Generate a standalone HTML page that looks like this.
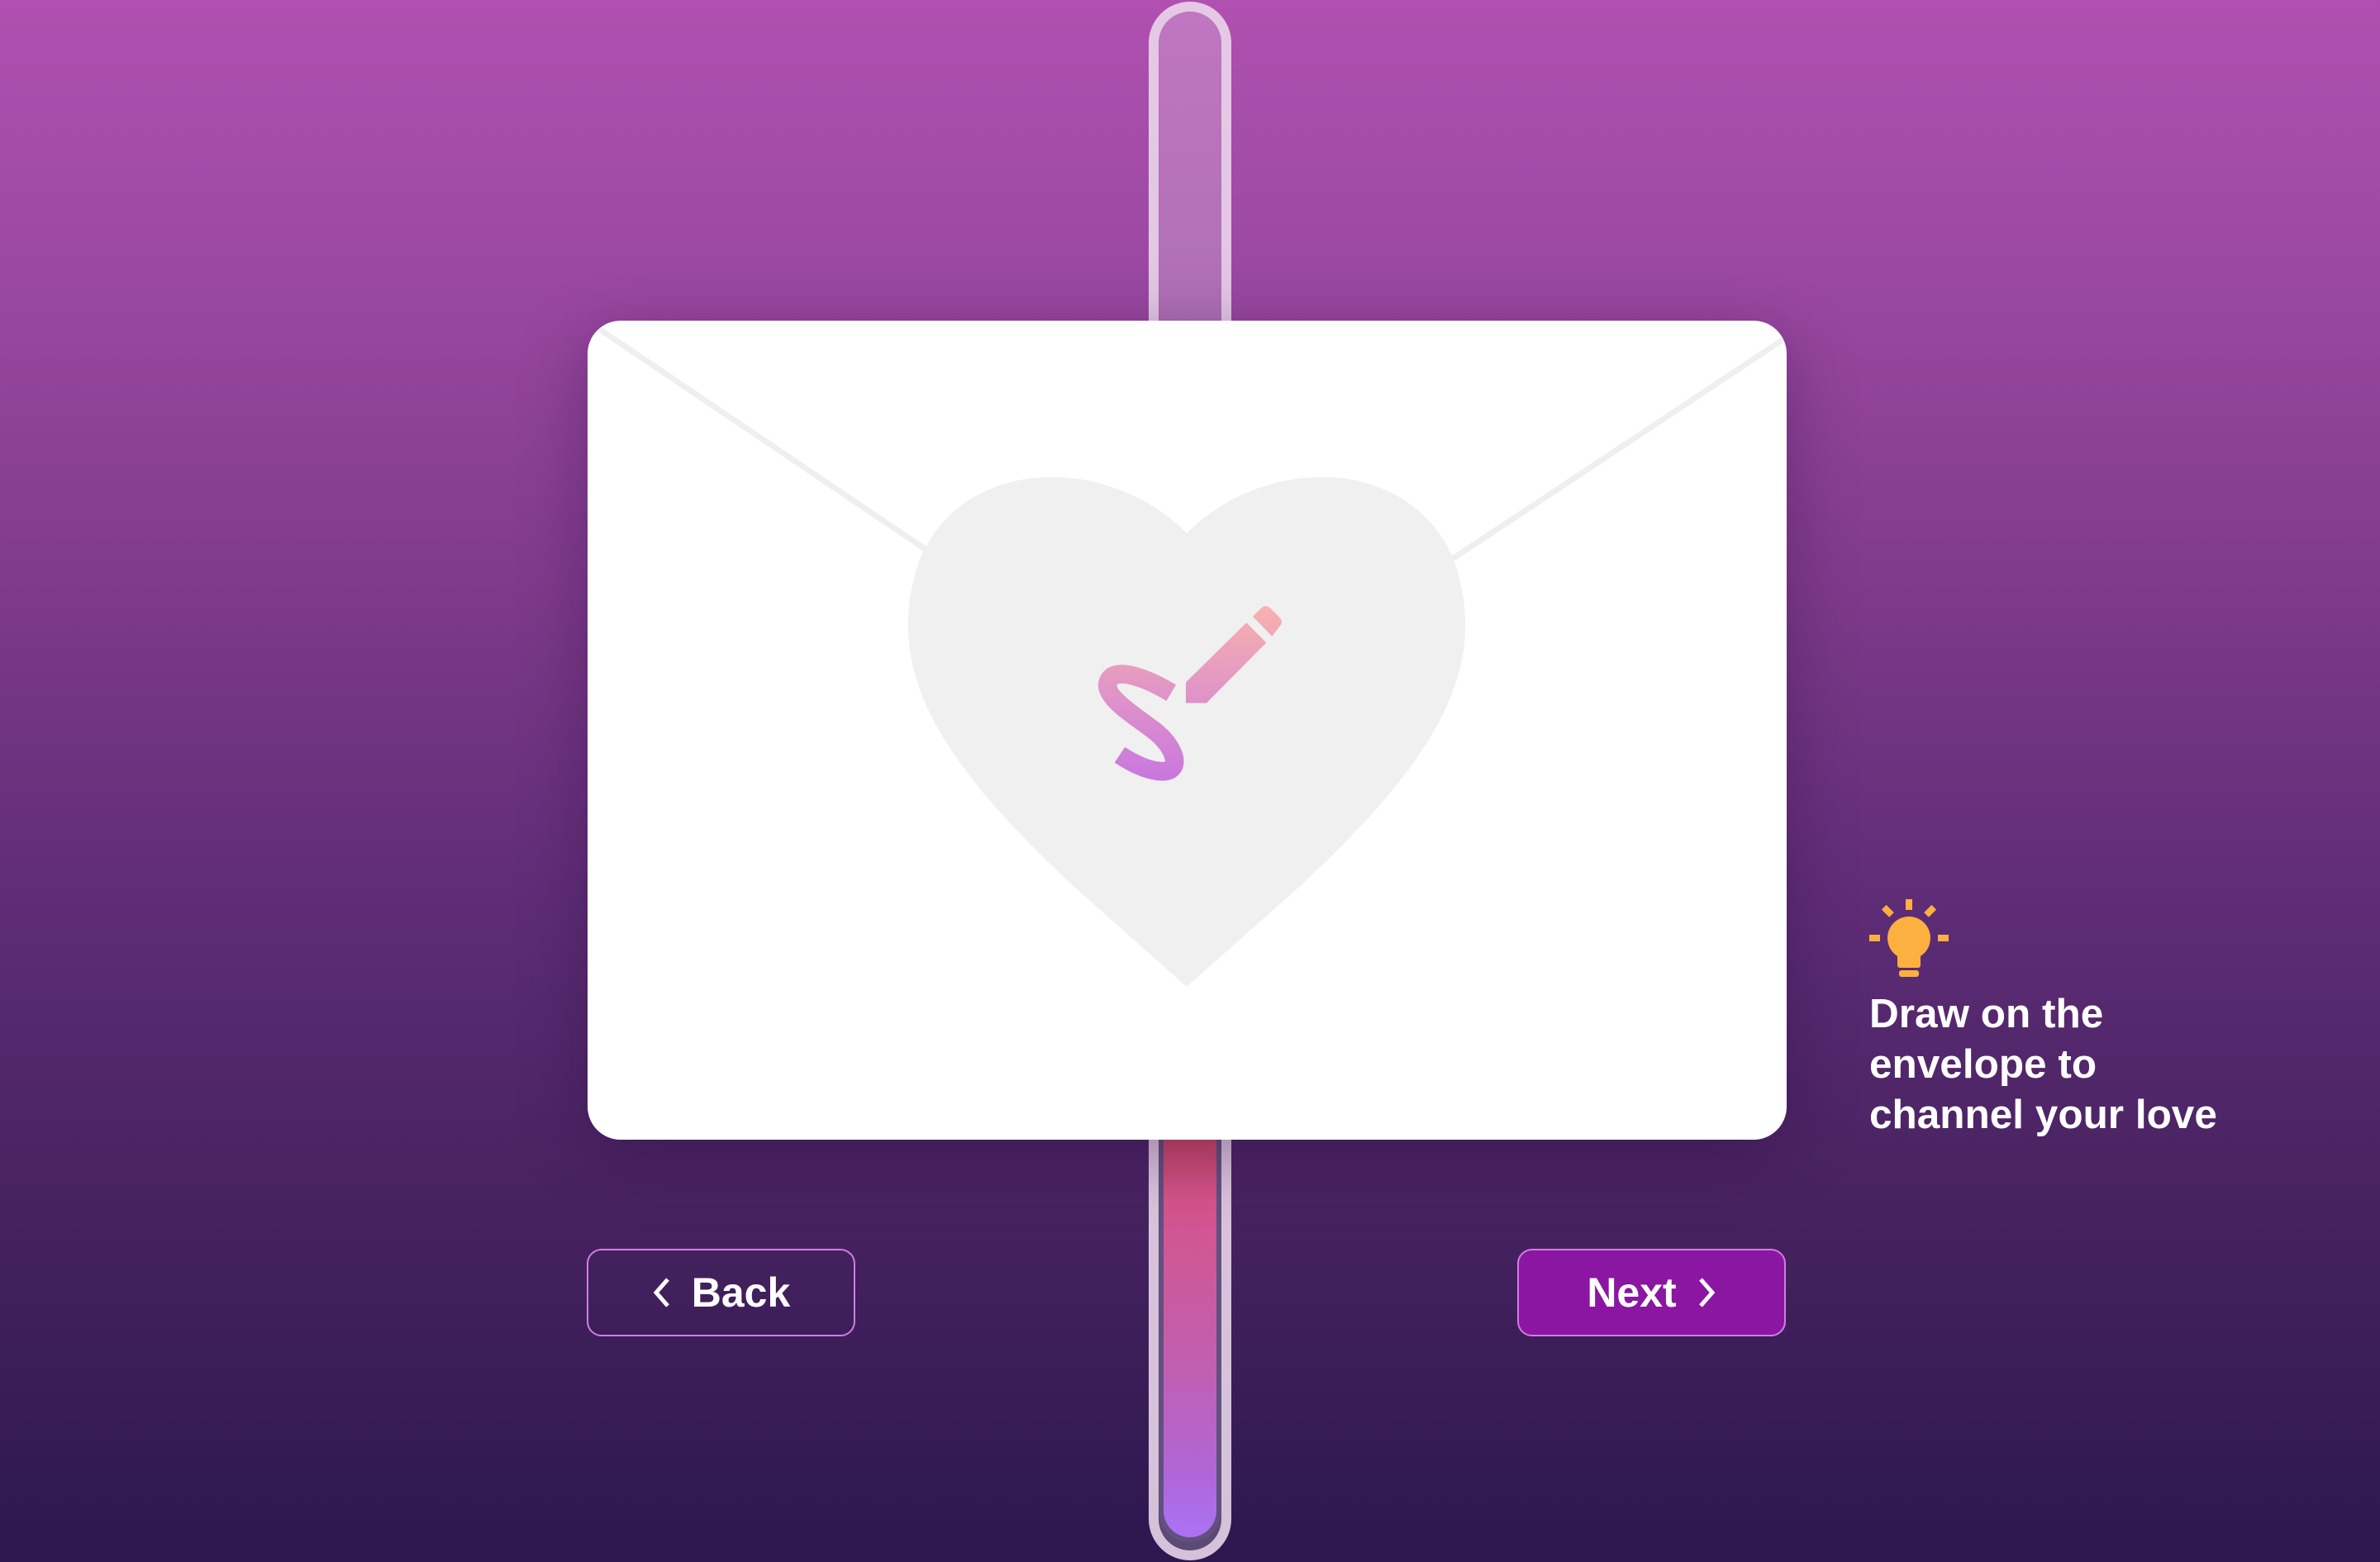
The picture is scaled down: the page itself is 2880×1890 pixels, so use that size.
<!DOCTYPE html>
<html><head><meta charset="utf-8"><style>
html,body{margin:0;padding:0}
body{width:2880px;height:1890px;position:relative;overflow:hidden;font-family:"Liberation Sans",sans-serif;
background:linear-gradient(180deg,#b050b0 0%,#9a48a2 18%,#7e3a8a 38%,#5e2c76 58%,#46225f 78%,#2c174f 100%);}
.tube{position:absolute;left:1390px;top:2px;width:76px;height:1862px;border:12px solid rgba(235,215,235,0.85);border-radius:50px;background:rgba(255,255,255,0.22);}
.fill{position:absolute;left:1402px;top:1370px;width:76px;height:496px;background:#62507f;border-radius:0 0 38px 38px;}
.fill div{position:absolute;left:6px;top:0;width:64px;height:490px;border-radius:0 0 32px 32px;background:linear-gradient(180deg,#c54762 0%,#d4548d 18%,#c35ead 55%,#b066d8 85%,#ab72f5 100%);}
.env{position:absolute;left:711px;top:388px;width:1451px;height:991px;background:#fff;border-radius:40px;box-shadow:0 20px 80px rgba(40,10,60,0.35);overflow:hidden}
.btn{position:absolute;top:1511px;width:325px;height:106px;border:2px solid #d07ee0;border-radius:18px;color:#fff;font-size:50px;font-weight:bold;box-sizing:border-box;display:flex;align-items:center;justify-content:center;gap:24px}
.tip{position:absolute;left:2262px;top:1196px;color:#fff;font-size:49.5px;font-weight:bold;line-height:61px}
</style></head><body>
<div class="tube"></div>
<div class="fill"><div></div></div>
<div class="env">
<svg width="1451" height="991" viewBox="711 388 1451 991" style="position:absolute;left:0;top:0">
<path d="M725,398 L1125,668 M2162,408 L1755,678" stroke="#efefef" stroke-width="7" fill="none"/>
<path d="M1436,645 C1335,545 1160,555 1112,680 C1068,810 1135,920 1302,1075 L1436,1194 L1570,1075 C1737,920 1804,810 1760,680 C1712,555 1537,545 1436,645 Z" fill="#f0f0f0"/>
<defs><linearGradient id="g" gradientUnits="userSpaceOnUse" x1="0" y1="160" x2="0" y2="800"><stop offset="0" stop-color="#f8b2ae"/><stop offset="1" stop-color="#c876e0"/></linearGradient></defs>
<g transform="translate(1300,680) scale(0.3333)">
<path d="M352,475 C260,420 150,380 125,430 C95,490 240,570 300,620 C370,680 390,760 320,760 C270,760 210,730 165,700" stroke="url(#g)" stroke-width="68" fill="none"/>
<polygon points="405,437 625,220 697,293 480,512 405,512" fill="url(#g)"/>
<path d="M648,198 L678,168 Q695,152 712,168 L745,201 Q761,218 745,234 L718,270 Z" fill="url(#g)"/>
</g>
</svg>
</div>
<div class="btn" style="left:710px;background:transparent"><svg width="24" height="40" viewBox="0 0 24 40"><path d="M19,4 L5,20 L19,36" stroke="#fff" stroke-width="5" fill="none"/></svg><span>Back</span></div>
<div class="btn" style="left:1836px;background:#8a16a2"><span>Next</span><svg width="24" height="40" viewBox="0 0 24 40"><path d="M5,4 L19,20 L5,36" stroke="#fff" stroke-width="5" fill="none"/></svg></div>
<svg style="position:absolute;left:2258px;top:1085px" width="104" height="104" viewBox="0 0 104 104">
<g fill="#fbb040">
<rect x="48" y="3" width="8" height="13"/>
<rect x="22" y="11" width="8" height="13" transform="rotate(-45 26 17)"/>
<rect x="74" y="11" width="8" height="13" transform="rotate(45 78 17)"/>
<rect x="4" y="46" width="13" height="8"/>
<rect x="87" y="46" width="13" height="8"/>
<circle cx="52" cy="50" r="26"/>
<rect x="38" y="62" width="28" height="24" rx="3"/>
<rect x="40" y="89" width="24" height="8" rx="3"/>
</g></svg>
<div class="tip">Draw on the<br>envelope to<br>channel your love</div>
</body></html>
